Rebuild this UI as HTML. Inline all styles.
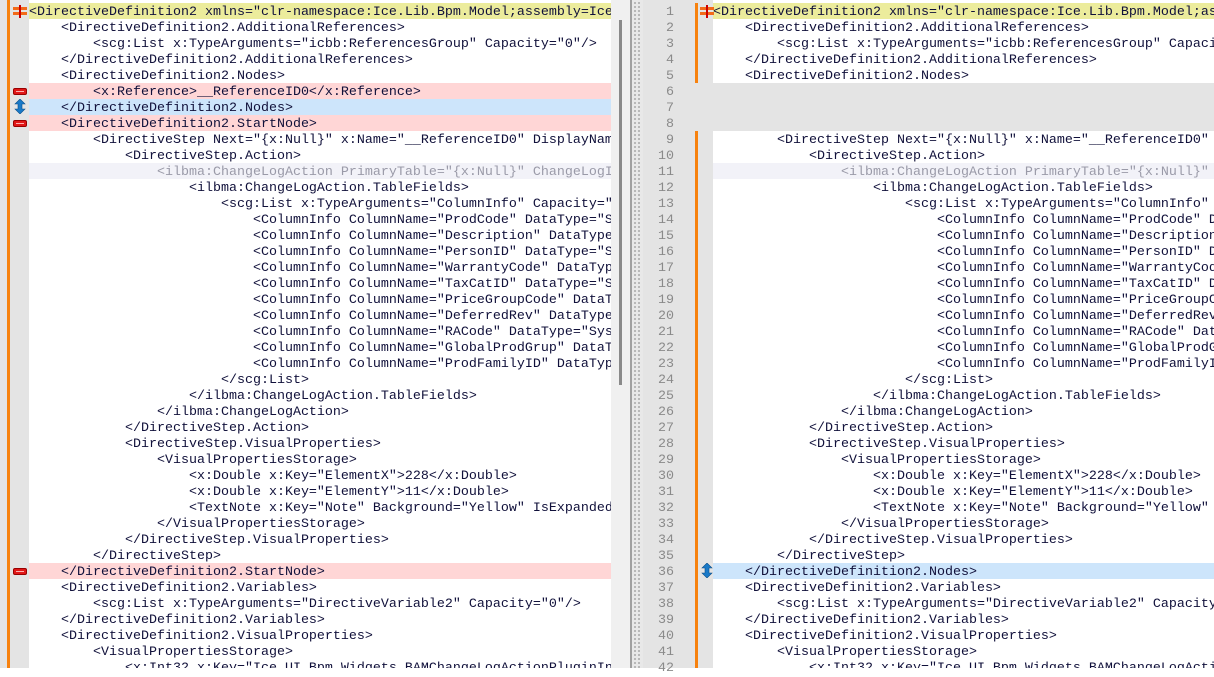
<!DOCTYPE html>
<html><head><meta charset="utf-8"><style>
body{margin:0;width:1214px;height:668px;overflow:hidden;background:#fff;font-family:"Liberation Mono",monospace;font-size:13.33px;color:#10103a;position:relative}
.pane{position:absolute;top:0;height:668px;overflow:hidden}
.ln{position:absolute;left:0;right:0;height:16px;line-height:16px;padding-top:2px;box-sizing:border-box;white-space:pre}
.y{background:#ecec9c}.r{background:#ffd6d6}.b{background:#cde5fb}.g{background:#f2f2f8;color:#9a9aa8}.e{background:#e4e4e4}
.num{position:absolute;width:31px;text-align:right;color:#8a8a8a;line-height:16px;height:16px;padding-top:2px;box-sizing:border-box}
.minus{position:absolute;width:14px;height:7px;background:#e01818;border:1px solid #900;border-radius:2px;box-sizing:border-box}
.minus:after{content:"";position:absolute;left:2px;right:2px;top:2px;height:1px;background:#ffb0b0}
#R .e{left:-70px}
</style></head><body>
<div style="position:absolute;left:0;top:0;width:29px;height:668px;background:#e4e4e4"></div>
<div style="position:absolute;left:7px;top:0;width:3px;height:668px;background:#f7820f"></div>
<div class="pane" id="L" style="left:29px;width:582px"></div>
<div style="position:absolute;left:611px;top:0;width:19px;height:668px;background:#f0f0f0"></div>
<div style="position:absolute;left:619px;top:20px;width:3px;height:365px;background:#8a8a8a"></div>
<div style="position:absolute;left:630px;top:0;width:2px;height:668px;background:#a0a0a0"></div>
<div style="position:absolute;left:632px;top:0;width:11px;height:668px;background:repeating-linear-gradient(90deg,#e8e8e8 0 2px,#b8b8b8 2px 4px,#e8e8e8 4px 6px,#b8b8b8 6px 8px,#e8e8e8 8px 11px)"></div>
<div style="position:absolute;left:632px;top:0;width:11px;height:668px;background:repeating-linear-gradient(0deg,transparent 0 2px,#e8e8e8 2px 4px)"></div>
<div style="position:absolute;left:643px;top:0;width:70px;height:668px;background:#e4e4e4" id="G"></div>
<div style="position:absolute;left:695px;top:3px;width:3px;height:80px;background:#f7820f"></div>
<div style="position:absolute;left:695px;top:131px;width:3px;height:537px;background:#f7820f"></div>
<div class="pane" id="R" style="left:713px;width:501px"></div>
<div style="position:absolute;left:13px;top:5px;width:14px;height:12px">
<div style="position:absolute;left:0;top:2px;width:14px;height:3px;background:#f26a1a"></div>
<div style="position:absolute;left:0;top:7px;width:14px;height:3px;background:#f26a1a"></div>
<div style="position:absolute;left:6px;top:0;width:2px;height:13px;background:#c00"></div></div>
<div style="position:absolute;left:700px;top:5px;width:14px;height:12px">
<div style="position:absolute;left:0;top:2px;width:14px;height:3px;background:#f26a1a"></div>
<div style="position:absolute;left:0;top:7px;width:14px;height:3px;background:#f26a1a"></div>
<div style="position:absolute;left:6px;top:0;width:2px;height:13px;background:#c00"></div></div>
<div class="minus" style="left:13px;top:88px"></div>
<div class="minus" style="left:13px;top:120px"></div>
<div class="minus" style="left:13px;top:568px"></div>
<svg style="position:absolute;left:14px;top:99px" width="12" height="15" viewBox="0 0 12 15"><path d="M6 0L11 5H8V10H11L6 15L1 10H4V5H1Z" fill="#1a7ac8" stroke="#0b4f8a" stroke-width=".6"/></svg>
<svg style="position:absolute;left:701px;top:563px" width="12" height="15" viewBox="0 0 12 15"><path d="M6 0L11 5H8V10H11L6 15L1 10H4V5H1Z" fill="#1a7ac8" stroke="#0b4f8a" stroke-width=".6"/></svg>
<script>
const L=[
["y",0,'<DirectiveDefinition2 xmlns="clr-namespace:Ice.Lib.Bpm.Model;assembly=Ice.Lib.Bpm"'],
["",4,'<DirectiveDefinition2.AdditionalReferences>'],
["",8,'<scg:List x:TypeArguments="icbb:ReferencesGroup" Capacity="0"/>'],
["",4,'</DirectiveDefinition2.AdditionalReferences>'],
["",4,'<DirectiveDefinition2.Nodes>'],
["r",8,'<x:Reference>__ReferenceID0</x:Reference>'],
["b",4,'</DirectiveDefinition2.Nodes>'],
["r",4,'<DirectiveDefinition2.StartNode>'],
["",8,'<DirectiveStep Next="{x:Null}" x:Name="__ReferenceID0" DisplayName="x"'],
["",12,'<DirectiveStep.Action>'],
["g",16,'<ilbma:ChangeLogAction PrimaryTable="{x:Null}" ChangeLogIdentifier'],
["",20,'<ilbma:ChangeLogAction.TableFields>'],
["",24,'<scg:List x:TypeArguments="ColumnInfo" Capacity="16">'],
["",28,'<ColumnInfo ColumnName="ProdCode" DataType="System"/>'],
["",28,'<ColumnInfo ColumnName="Description" DataType="System"/>'],
["",28,'<ColumnInfo ColumnName="PersonID" DataType="System"/>'],
["",28,'<ColumnInfo ColumnName="WarrantyCode" DataType="System"/>'],
["",28,'<ColumnInfo ColumnName="TaxCatID" DataType="System"/>'],
["",28,'<ColumnInfo ColumnName="PriceGroupCode" DataType="System"/>'],
["",28,'<ColumnInfo ColumnName="DeferredRev" DataType="System"/>'],
["",28,'<ColumnInfo ColumnName="RACode" DataType="System"/>'],
["",28,'<ColumnInfo ColumnName="GlobalProdGrup" DataType="System"/>'],
["",28,'<ColumnInfo ColumnName="ProdFamilyID" DataType="System"/>'],
["",24,'</scg:List>'],
["",20,'</ilbma:ChangeLogAction.TableFields>'],
["",16,'</ilbma:ChangeLogAction>'],
["",12,'</DirectiveStep.Action>'],
["",12,'<DirectiveStep.VisualProperties>'],
["",16,'<VisualPropertiesStorage>'],
["",20,'<x:Double x:Key="ElementX">228</x:Double>'],
["",20,'<x:Double x:Key="ElementY">11</x:Double>'],
["",20,'<TextNote x:Key="Note" Background="Yellow" IsExpanded="True"'],
["",16,'</VisualPropertiesStorage>'],
["",12,'</DirectiveStep.VisualProperties>'],
["",8,'</DirectiveStep>'],
["r",4,'</DirectiveDefinition2.StartNode>'],
["",4,'<DirectiveDefinition2.Variables>'],
["",8,'<scg:List x:TypeArguments="DirectiveVariable2" Capacity="0"/>'],
["",4,'</DirectiveDefinition2.Variables>'],
["",4,'<DirectiveDefinition2.VisualProperties>'],
["",8,'<VisualPropertiesStorage>'],
["",12,'<x:Int32 x:Key="Ice.UI.Bpm.Widgets.BAMChangeLogActionPluginInfo"'],
];
function esc(s){return s.replace(/&/g,'&amp;').replace(/</g,'&lt;')}
let hl='',hr='',hg='';
L.forEach((l,i)=>{hl+=`<div class="ln ${l[0]}" style="top:${3+i*16}px">${' '.repeat(l[1])+esc(l[2])}</div>`});
const R=[];
for(let i=0;i<5;i++)R.push(L[i]);
R.push(["e",0,''],["e",0,''],["e",0,'']);
for(let i=8;i<35;i++)R.push(L[i]);
R.push(["b",4,'</DirectiveDefinition2.Nodes>']);
for(let i=36;i<42;i++)R.push(L[i]);
R.forEach((l,i)=>{hr+=`<div class="ln ${l[0]}" style="top:${3+i*16}px">${' '.repeat(l[1])+esc(l[2])}</div>`;
hg+=`<div class="num" style="left:0;top:${3+i*16}px">${i+1}</div>`;});
document.getElementById('L').innerHTML=hl;
document.getElementById('R').innerHTML=hr;
document.getElementById('G').innerHTML=hg;
</script>
</body></html>
